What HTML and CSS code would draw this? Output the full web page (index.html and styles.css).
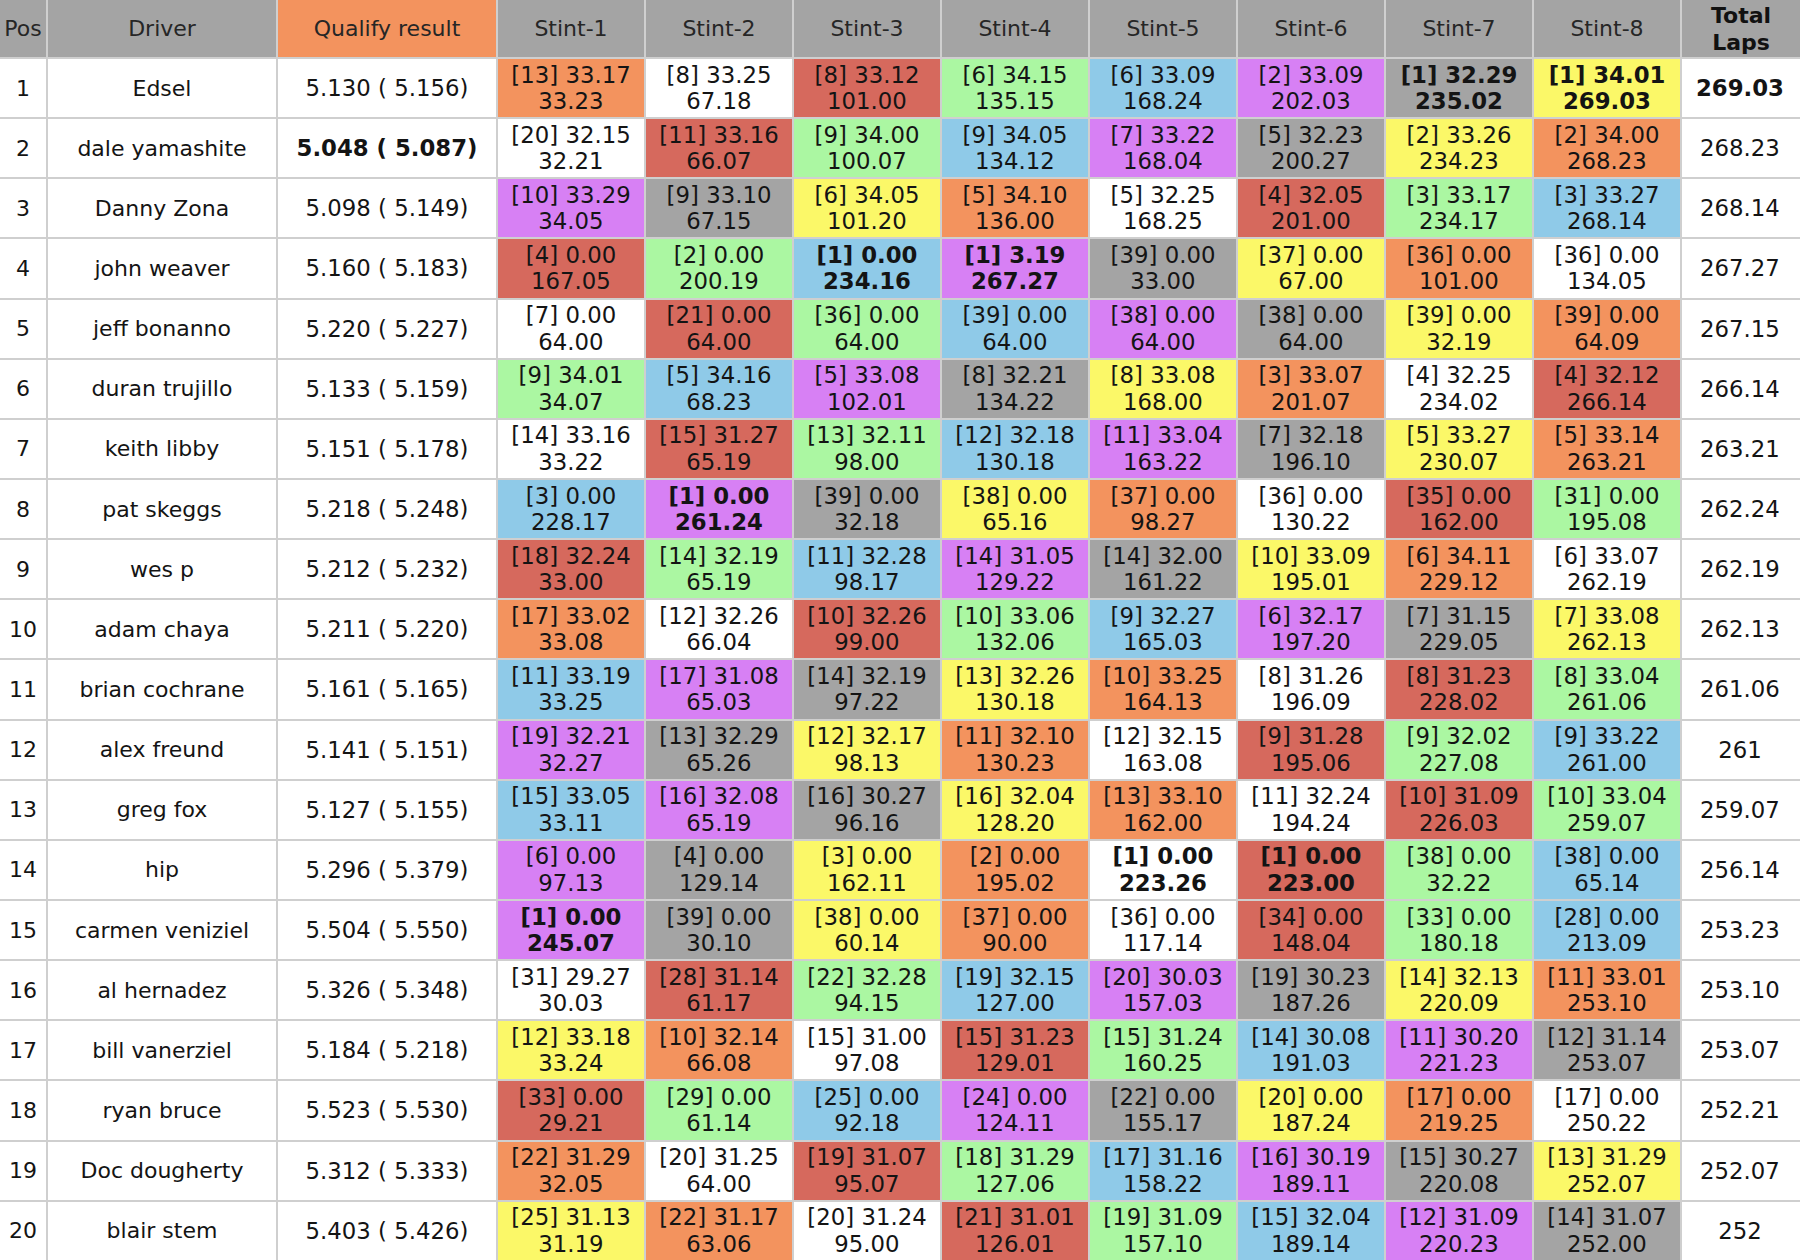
FILE: index.html
```html
<!DOCTYPE html>
<html>
<head>
<meta charset="utf-8">
<title>Race results</title>
<link rel="stylesheet" href="styles.css">
</head>
<body>
<table class="results">
<colgroup>
<col class="c-pos"><col class="c-driver"><col class="c-qual">
<col class="c-stint"><col class="c-stint"><col class="c-stint"><col class="c-stint">
<col class="c-stint"><col class="c-stint"><col class="c-stint"><col class="c-stint">
<col class="c-total">
</colgroup>
<thead>
<tr>
<th>Pos</th><th>Driver</th><th class="qhead">Qualify result</th>
<th>Stint-1</th><th>Stint-2</th><th>Stint-3</th><th>Stint-4</th><th>Stint-5</th><th>Stint-6</th><th>Stint-7</th><th>Stint-8</th>
<th class="thead-total">Total<br>Laps</th>
</tr>
</thead>
<tbody>
<tr><td class="pos">1</td><td class="name">Edsel</td><td class="qual">5.130 ( 5.156)</td>
<td class="st o">[13] 33.17<br>33.23</td><td class="st w">[8] 33.25<br>67.18</td><td class="st r">[8] 33.12<br>101.00</td><td class="st g">[6] 34.15<br>135.15</td><td class="st b">[6] 33.09<br>168.24</td><td class="st p">[2] 33.09<br>202.03</td><td class="st k best">[1] 32.29<br>235.02</td><td class="st y best">[1] 34.01<br>269.03</td>
<td class="total best">269.03</td></tr>
<tr><td class="pos">2</td><td class="name">dale yamashite</td><td class="qual best">5.048 ( 5.087)</td>
<td class="st w">[20] 32.15<br>32.21</td><td class="st r">[11] 33.16<br>66.07</td><td class="st g">[9] 34.00<br>100.07</td><td class="st b">[9] 34.05<br>134.12</td><td class="st p">[7] 33.22<br>168.04</td><td class="st k">[5] 32.23<br>200.27</td><td class="st y">[2] 33.26<br>234.23</td><td class="st o">[2] 34.00<br>268.23</td>
<td class="total">268.23</td></tr>
<tr><td class="pos">3</td><td class="name">Danny Zona</td><td class="qual">5.098 ( 5.149)</td>
<td class="st p">[10] 33.29<br>34.05</td><td class="st k">[9] 33.10<br>67.15</td><td class="st y">[6] 34.05<br>101.20</td><td class="st o">[5] 34.10<br>136.00</td><td class="st w">[5] 32.25<br>168.25</td><td class="st r">[4] 32.05<br>201.00</td><td class="st g">[3] 33.17<br>234.17</td><td class="st b">[3] 33.27<br>268.14</td>
<td class="total">268.14</td></tr>
<tr><td class="pos">4</td><td class="name">john weaver</td><td class="qual">5.160 ( 5.183)</td>
<td class="st r">[4] 0.00<br>167.05</td><td class="st g">[2] 0.00<br>200.19</td><td class="st b best">[1] 0.00<br>234.16</td><td class="st p best">[1] 3.19<br>267.27</td><td class="st k">[39] 0.00<br>33.00</td><td class="st y">[37] 0.00<br>67.00</td><td class="st o">[36] 0.00<br>101.00</td><td class="st w">[36] 0.00<br>134.05</td>
<td class="total">267.27</td></tr>
<tr><td class="pos">5</td><td class="name">jeff bonanno</td><td class="qual">5.220 ( 5.227)</td>
<td class="st w">[7] 0.00<br>64.00</td><td class="st r">[21] 0.00<br>64.00</td><td class="st g">[36] 0.00<br>64.00</td><td class="st b">[39] 0.00<br>64.00</td><td class="st p">[38] 0.00<br>64.00</td><td class="st k">[38] 0.00<br>64.00</td><td class="st y">[39] 0.00<br>32.19</td><td class="st o">[39] 0.00<br>64.09</td>
<td class="total">267.15</td></tr>
<tr><td class="pos">6</td><td class="name">duran trujillo</td><td class="qual">5.133 ( 5.159)</td>
<td class="st g">[9] 34.01<br>34.07</td><td class="st b">[5] 34.16<br>68.23</td><td class="st p">[5] 33.08<br>102.01</td><td class="st k">[8] 32.21<br>134.22</td><td class="st y">[8] 33.08<br>168.00</td><td class="st o">[3] 33.07<br>201.07</td><td class="st w">[4] 32.25<br>234.02</td><td class="st r">[4] 32.12<br>266.14</td>
<td class="total">266.14</td></tr>
<tr><td class="pos">7</td><td class="name">keith libby</td><td class="qual">5.151 ( 5.178)</td>
<td class="st w">[14] 33.16<br>33.22</td><td class="st r">[15] 31.27<br>65.19</td><td class="st g">[13] 32.11<br>98.00</td><td class="st b">[12] 32.18<br>130.18</td><td class="st p">[11] 33.04<br>163.22</td><td class="st k">[7] 32.18<br>196.10</td><td class="st y">[5] 33.27<br>230.07</td><td class="st o">[5] 33.14<br>263.21</td>
<td class="total">263.21</td></tr>
<tr><td class="pos">8</td><td class="name">pat skeggs</td><td class="qual">5.218 ( 5.248)</td>
<td class="st b">[3] 0.00<br>228.17</td><td class="st p best">[1] 0.00<br>261.24</td><td class="st k">[39] 0.00<br>32.18</td><td class="st y">[38] 0.00<br>65.16</td><td class="st o">[37] 0.00<br>98.27</td><td class="st w">[36] 0.00<br>130.22</td><td class="st r">[35] 0.00<br>162.00</td><td class="st g">[31] 0.00<br>195.08</td>
<td class="total">262.24</td></tr>
<tr><td class="pos">9</td><td class="name">wes p</td><td class="qual">5.212 ( 5.232)</td>
<td class="st r">[18] 32.24<br>33.00</td><td class="st g">[14] 32.19<br>65.19</td><td class="st b">[11] 32.28<br>98.17</td><td class="st p">[14] 31.05<br>129.22</td><td class="st k">[14] 32.00<br>161.22</td><td class="st y">[10] 33.09<br>195.01</td><td class="st o">[6] 34.11<br>229.12</td><td class="st w">[6] 33.07<br>262.19</td>
<td class="total">262.19</td></tr>
<tr><td class="pos">10</td><td class="name">adam chaya</td><td class="qual">5.211 ( 5.220)</td>
<td class="st o">[17] 33.02<br>33.08</td><td class="st w">[12] 32.26<br>66.04</td><td class="st r">[10] 32.26<br>99.00</td><td class="st g">[10] 33.06<br>132.06</td><td class="st b">[9] 32.27<br>165.03</td><td class="st p">[6] 32.17<br>197.20</td><td class="st k">[7] 31.15<br>229.05</td><td class="st y">[7] 33.08<br>262.13</td>
<td class="total">262.13</td></tr>
<tr><td class="pos">11</td><td class="name">brian cochrane</td><td class="qual">5.161 ( 5.165)</td>
<td class="st b">[11] 33.19<br>33.25</td><td class="st p">[17] 31.08<br>65.03</td><td class="st k">[14] 32.19<br>97.22</td><td class="st y">[13] 32.26<br>130.18</td><td class="st o">[10] 33.25<br>164.13</td><td class="st w">[8] 31.26<br>196.09</td><td class="st r">[8] 31.23<br>228.02</td><td class="st g">[8] 33.04<br>261.06</td>
<td class="total">261.06</td></tr>
<tr><td class="pos">12</td><td class="name">alex freund</td><td class="qual">5.141 ( 5.151)</td>
<td class="st p">[19] 32.21<br>32.27</td><td class="st k">[13] 32.29<br>65.26</td><td class="st y">[12] 32.17<br>98.13</td><td class="st o">[11] 32.10<br>130.23</td><td class="st w">[12] 32.15<br>163.08</td><td class="st r">[9] 31.28<br>195.06</td><td class="st g">[9] 32.02<br>227.08</td><td class="st b">[9] 33.22<br>261.00</td>
<td class="total">261</td></tr>
<tr><td class="pos">13</td><td class="name">greg fox</td><td class="qual">5.127 ( 5.155)</td>
<td class="st b">[15] 33.05<br>33.11</td><td class="st p">[16] 32.08<br>65.19</td><td class="st k">[16] 30.27<br>96.16</td><td class="st y">[16] 32.04<br>128.20</td><td class="st o">[13] 33.10<br>162.00</td><td class="st w">[11] 32.24<br>194.24</td><td class="st r">[10] 31.09<br>226.03</td><td class="st g">[10] 33.04<br>259.07</td>
<td class="total">259.07</td></tr>
<tr><td class="pos">14</td><td class="name">hip</td><td class="qual">5.296 ( 5.379)</td>
<td class="st p">[6] 0.00<br>97.13</td><td class="st k">[4] 0.00<br>129.14</td><td class="st y">[3] 0.00<br>162.11</td><td class="st o">[2] 0.00<br>195.02</td><td class="st w best">[1] 0.00<br>223.26</td><td class="st r best">[1] 0.00<br>223.00</td><td class="st g">[38] 0.00<br>32.22</td><td class="st b">[38] 0.00<br>65.14</td>
<td class="total">256.14</td></tr>
<tr><td class="pos">15</td><td class="name">carmen veniziel</td><td class="qual">5.504 ( 5.550)</td>
<td class="st p best">[1] 0.00<br>245.07</td><td class="st k">[39] 0.00<br>30.10</td><td class="st y">[38] 0.00<br>60.14</td><td class="st o">[37] 0.00<br>90.00</td><td class="st w">[36] 0.00<br>117.14</td><td class="st r">[34] 0.00<br>148.04</td><td class="st g">[33] 0.00<br>180.18</td><td class="st b">[28] 0.00<br>213.09</td>
<td class="total">253.23</td></tr>
<tr><td class="pos">16</td><td class="name">al hernadez</td><td class="qual">5.326 ( 5.348)</td>
<td class="st w">[31] 29.27<br>30.03</td><td class="st r">[28] 31.14<br>61.17</td><td class="st g">[22] 32.28<br>94.15</td><td class="st b">[19] 32.15<br>127.00</td><td class="st p">[20] 30.03<br>157.03</td><td class="st k">[19] 30.23<br>187.26</td><td class="st y">[14] 32.13<br>220.09</td><td class="st o">[11] 33.01<br>253.10</td>
<td class="total">253.10</td></tr>
<tr><td class="pos">17</td><td class="name">bill vanerziel</td><td class="qual">5.184 ( 5.218)</td>
<td class="st y">[12] 33.18<br>33.24</td><td class="st o">[10] 32.14<br>66.08</td><td class="st w">[15] 31.00<br>97.08</td><td class="st r">[15] 31.23<br>129.01</td><td class="st g">[15] 31.24<br>160.25</td><td class="st b">[14] 30.08<br>191.03</td><td class="st p">[11] 30.20<br>221.23</td><td class="st k">[12] 31.14<br>253.07</td>
<td class="total">253.07</td></tr>
<tr><td class="pos">18</td><td class="name">ryan bruce</td><td class="qual">5.523 ( 5.530)</td>
<td class="st r">[33] 0.00<br>29.21</td><td class="st g">[29] 0.00<br>61.14</td><td class="st b">[25] 0.00<br>92.18</td><td class="st p">[24] 0.00<br>124.11</td><td class="st k">[22] 0.00<br>155.17</td><td class="st y">[20] 0.00<br>187.24</td><td class="st o">[17] 0.00<br>219.25</td><td class="st w">[17] 0.00<br>250.22</td>
<td class="total">252.21</td></tr>
<tr><td class="pos">19</td><td class="name">Doc dougherty</td><td class="qual">5.312 ( 5.333)</td>
<td class="st o">[22] 31.29<br>32.05</td><td class="st w">[20] 31.25<br>64.00</td><td class="st r">[19] 31.07<br>95.07</td><td class="st g">[18] 31.29<br>127.06</td><td class="st b">[17] 31.16<br>158.22</td><td class="st p">[16] 30.19<br>189.11</td><td class="st k">[15] 30.27<br>220.08</td><td class="st y">[13] 31.29<br>252.07</td>
<td class="total">252.07</td></tr>
<tr><td class="pos">20</td><td class="name">blair stem</td><td class="qual">5.403 ( 5.426)</td>
<td class="st y">[25] 31.13<br>31.19</td><td class="st o">[22] 31.17<br>63.06</td><td class="st w">[20] 31.24<br>95.00</td><td class="st r">[21] 31.01<br>126.01</td><td class="st g">[19] 31.09<br>157.10</td><td class="st b">[15] 32.04<br>189.14</td><td class="st p">[12] 31.09<br>220.23</td><td class="st k">[14] 31.07<br>252.00</td>
<td class="total">252</td></tr>
</tbody>
</table>
</body>
</html>
```

FILE: styles.css
```css
html, body {
  margin: 0;
  padding: 0;
  background: #cfcfcf;
  overflow: hidden;
}

body {
  width: 1800px;
  height: 1260px;
  font-family: "DejaVu Sans", Verdana, sans-serif;
  color: #141414;
}

.results {
  table-layout: fixed;
  width: 1804px;
  margin: -2px 0 0 -2px;
  border-collapse: separate;
  border-spacing: 2px;
  background: #cfcfcf;
}

.c-pos { width: 46px; }
.c-driver { width: 228px; }
.c-qual { width: 218px; }
.c-stint { width: 146px; }
.c-total { width: 120px; }

th {
  height: 57px;
  padding: 0;
  background: #a4a4a4;
  color: #262626;
  font-weight: normal;
  font-size: 22px;
  text-align: center;
  vertical-align: middle;
  white-space: nowrap;
}

th.qhead {
  background: #f3935e;
}

th.thead-total {
  font-weight: bold;
  color: #111;
  line-height: 27px;
  padding-right: 2px;
}

td {
  height: 58.15px;
  padding: 0;
  background: #ffffff;
  text-align: center;
  vertical-align: middle;
  white-space: nowrap;
}

.pos,
.name {
  font-size: 22px;
}

.qual,
.total {
  font-size: 22.8px;
}

.total {
  padding-right: 4px;
}

.st {
  font-size: 22.8px;
  line-height: 26.5px;
}

.best {
  font-weight: bold;
}

.o { background: #f3935e; }
.w { background: #ffffff; }
.r { background: #d6695d; }
.g { background: #abf7a2; }
.b { background: #8fcae8; }
.p { background: #d780f4; }
.k { background: #a4a4a4; }
.y { background: #fbf868; }
```
